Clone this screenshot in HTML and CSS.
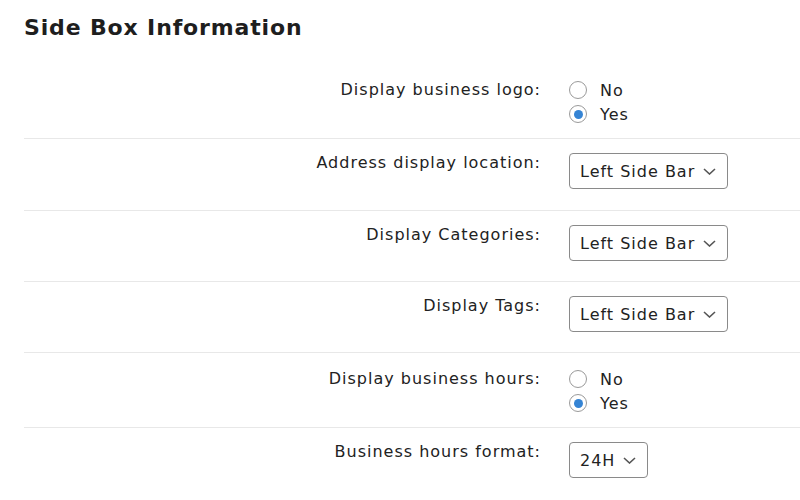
FILE: index.html
```html
<!DOCTYPE html>
<html>
<head>
<meta charset="utf-8">
<link rel="stylesheet" href="styles.css">
</head>
<body>
<div class="page">
  <h2 class="title">Side Box Information</h2>
  <div class="form">
    <div class="row row-radio">
      <div class="label">Display business logo:</div>
      <div class="control">
        <label class="radio"><span class="dot"></span>No</label>
        <label class="radio"><span class="dot on"></span>Yes</label>
      </div>
    </div>
    <div class="row">
      <div class="label">Address display location:</div>
      <div class="control"><div class="select">Left Side Bar<svg class="chev" viewBox="0 0 13 7" width="13" height="7"><path d="M1 1 L6.5 6 L12 1" fill="none" stroke="#555" stroke-width="1.6"/></svg></div></div>
    </div>
    <div class="row">
      <div class="label">Display Categories:</div>
      <div class="control"><div class="select">Left Side Bar<svg class="chev" viewBox="0 0 13 7" width="13" height="7"><path d="M1 1 L6.5 6 L12 1" fill="none" stroke="#555" stroke-width="1.6"/></svg></div></div>
    </div>
    <div class="row">
      <div class="label">Display Tags:</div>
      <div class="control"><div class="select">Left Side Bar<svg class="chev" viewBox="0 0 13 7" width="13" height="7"><path d="M1 1 L6.5 6 L12 1" fill="none" stroke="#555" stroke-width="1.6"/></svg></div></div>
    </div>
    <div class="row row-radio">
      <div class="label">Display business hours:</div>
      <div class="control">
        <label class="radio"><span class="dot"></span>No</label>
        <label class="radio"><span class="dot on"></span>Yes</label>
      </div>
    </div>
    <div class="row">
      <div class="label">Business hours format:</div>
      <div class="control"><div class="select">24H<svg class="chev" viewBox="0 0 13 7" width="13" height="7"><path d="M1 1 L6.5 6 L12 1" fill="none" stroke="#555" stroke-width="1.6"/></svg></div></div>
    </div>
  </div>
</div>
</body>
</html>
```
FILE: styles.css
```css
html, body { margin: 0; padding: 0; background: #fff; }
body { font-family: "DejaVu Sans", Verdana, sans-serif; color: #222; overflow: hidden; }
.page { padding: 0 0 0 24px; }
.title { margin: 0; padding-top: 14px; font-size: 22px; letter-spacing: 0.85px; font-weight: bold; line-height: 28px; color: #1e1e1e; height: 50px; }
.form { display: flex; flex-direction: column; }
.row { display: grid; grid-template-columns: 517px 1fr; column-gap: 28px; padding: 14px 0 20px; border-bottom: 1px solid #e8e8e8; }
.row-radio { padding-bottom: 12px; }
.row-radio + .row { padding-bottom: 21px; }
.row:last-child { border-bottom: none; }
.label { text-align: right; font-size: 16px; line-height: 20px; letter-spacing: 1px; }
.row-radio .label { padding-top: 2px; }
.control { display: flex; flex-direction: column; align-items: flex-start; }
.radio { display: flex; align-items: center; height: 24px; font-size: 16px; letter-spacing: 1px; gap: 13px; }
.dot { width: 18px; height: 18px; border: 1px solid #9a9a9a; border-radius: 50%; box-sizing: border-box; position: relative; background: #fff; }
.dot.on::after { content: ""; position: absolute; left: 3.5px; top: 3.5px; width: 9px; height: 9px; border-radius: 50%; background: #3584d4; }
.select { display: flex; align-items: center; height: 36px; box-sizing: border-box; border: 1px solid #8a8a8a; border-radius: 4px; padding: 0 11px 0 10px; font-size: 16px; letter-spacing: 1px; gap: 8px; }
.chev { display: block; }
```
